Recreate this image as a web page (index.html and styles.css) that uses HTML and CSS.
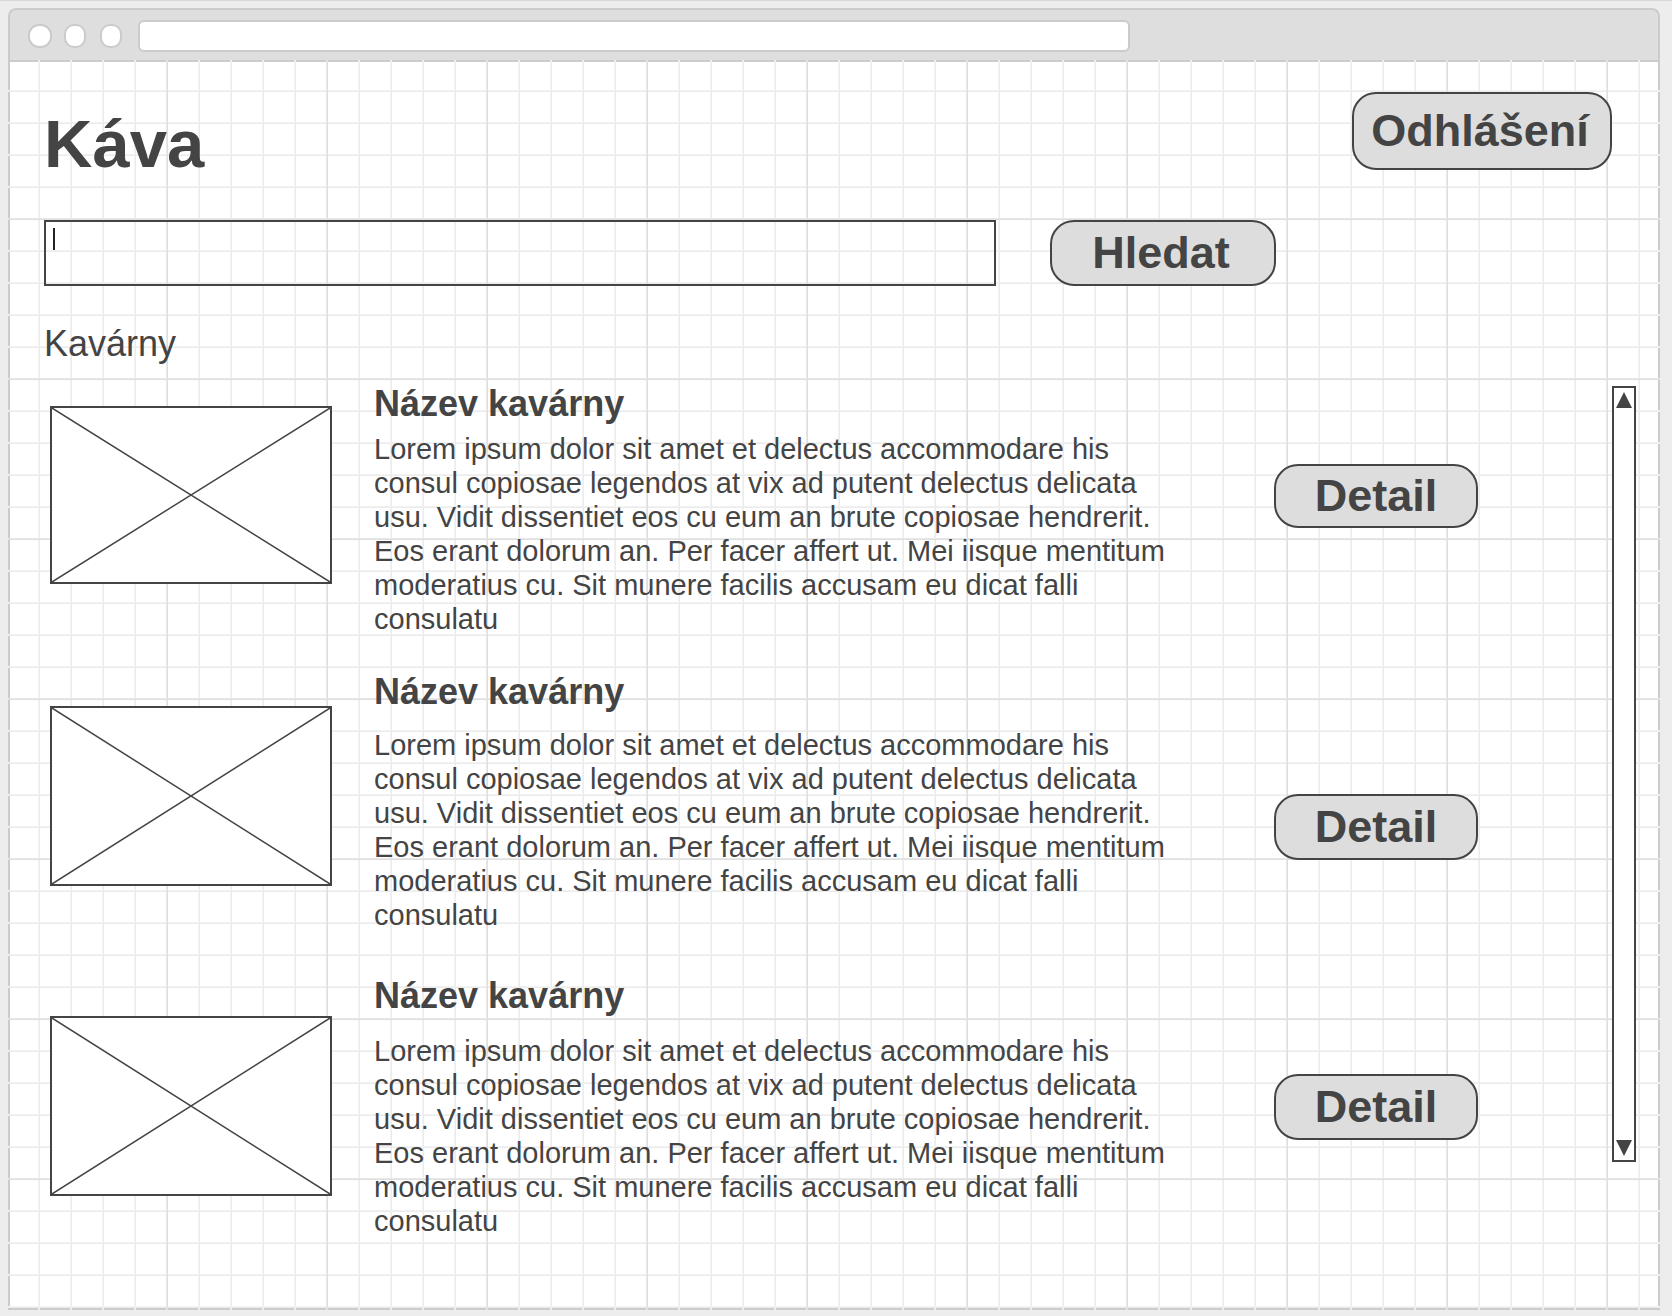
FILE: index.html
```html
<!DOCTYPE html>
<html lang="cs">
<head>
<meta charset="utf-8">
<meta name="viewport" content="width=device-width, initial-scale=1">
<title>Káva</title>
<link rel="stylesheet" href="styles.css">
</head>
<body>
<div class="window">
  <div class="window-bar">
    <span class="dot dot-wide"></span>
    <span class="dot"></span>
    <span class="dot"></span>
    <input class="address" type="text" aria-label="Adresa">
  </div>
  <div class="canvas">
    <header class="header">
      <h1 class="brand">Káva</h1>
      <button class="button button-logout" type="button">Odhlášení</button>
    </header>
    <form class="search">
      <div class="search-field">
        <input class="search-input" type="text" aria-label="Hledat kavárnu">
        <span class="caret"></span>
      </div>
      <button class="button button-search" type="button">Hledat</button>
    </form>
    <h2 class="section-title">Kavárny</h2>
    <div class="results">
      <main class="list">
        <article class="cafe cafe-first">
          <svg class="photo" viewBox="0 0 278 176" preserveAspectRatio="none" aria-hidden="true"><path d="M0 0L278 176M278 0L0 176"/></svg>
          <div class="info">
            <h3 class="name">Název kavárny</h3>
            <p class="text">Lorem ipsum dolor sit amet et delectus accommodare his consul copiosae legendos at vix ad putent delectus delicata usu. Vidit dissentiet eos cu eum an brute copiosae hendrerit. Eos erant dolorum an. Per facer affert ut. Mei iisque mentitum moderatius cu. Sit munere facilis accusam eu dicat falli consulatu</p>
          </div>
          <button class="button button-detail" type="button">Detail</button>
        </article>
        <article class="cafe cafe-second">
          <svg class="photo" viewBox="0 0 278 176" preserveAspectRatio="none" aria-hidden="true"><path d="M0 0L278 176M278 0L0 176"/></svg>
          <div class="info">
            <h3 class="name">Název kavárny</h3>
            <p class="text">Lorem ipsum dolor sit amet et delectus accommodare his consul copiosae legendos at vix ad putent delectus delicata usu. Vidit dissentiet eos cu eum an brute copiosae hendrerit. Eos erant dolorum an. Per facer affert ut. Mei iisque mentitum moderatius cu. Sit munere facilis accusam eu dicat falli consulatu</p>
          </div>
          <button class="button button-detail" type="button">Detail</button>
        </article>
        <article class="cafe cafe-third">
          <svg class="photo" viewBox="0 0 278 176" preserveAspectRatio="none" aria-hidden="true"><path d="M0 0L278 176M278 0L0 176"/></svg>
          <div class="info">
            <h3 class="name">Název kavárny</h3>
            <p class="text">Lorem ipsum dolor sit amet et delectus accommodare his consul copiosae legendos at vix ad putent delectus delicata usu. Vidit dissentiet eos cu eum an brute copiosae hendrerit. Eos erant dolorum an. Per facer affert ut. Mei iisque mentitum moderatius cu. Sit munere facilis accusam eu dicat falli consulatu</p>
          </div>
          <button class="button button-detail" type="button">Detail</button>
        </article>
      </main>
      <div class="scrollbar">
        <button class="arrow" type="button" aria-label="Nahoru"><svg class="arrow-icon" viewBox="0 0 16 16"><path d="M8 0L16 16H0Z"/></svg></button>
        <button class="arrow" type="button" aria-label="Dolů"><svg class="arrow-icon" viewBox="0 0 16 16"><path d="M0 0H16L8 16Z"/></svg></button>
      </div>
    </div>
  </div>
</div>
</body>
</html>
```
FILE: styles.css
```css
* {
  box-sizing: border-box;
}

body {
  margin: 0;
  padding: 7px 12px 6px 8px;
  border-top: 1px solid #d8d8d8;
  background: #ededed;
  color: #444444;
  font-family: "Liberation Sans", Arial, sans-serif;
}

h1,
h2,
h3,
p {
  margin: 0;
}

.window {
  background: #ffffff;
  border-radius: 8px 8px 0 0;
}

.window-bar {
  display: flex;
  align-items: center;
  gap: 12px;
  height: 52px;
  padding: 2px 18px 0;
  border: 2px solid #cbcbcb;
  border-bottom: 0;
  border-radius: 8px 8px 0 0;
  background: #dedede;
}

.dot {
  flex: none;
  width: 22px;
  height: 24px;
  margin-right: 2px;
  border: 2px solid #cbcbcb;
  border-radius: 10px;
  background: #ffffff;
}

.dot-wide {
  width: 24px;
  margin-right: 0;
  border-radius: 11px;
}

.address {
  flex: 0 1 992px;
  min-width: 0;
  height: 32px;
  margin: 0 0 0 2px;
  border: 2px solid #cbcbcb;
  border-radius: 6px;
  background: #ffffff;
}

.canvas {
  position: relative;
  isolation: isolate;
  padding: 30px 22px 70px 34px;
  border: 2px solid #cbcbcb;
}

/* squared paper: fine lines every 32px, stronger ones every 160px */
.canvas::before {
  content: "";
  position: absolute;
  inset: -2px;
  z-index: -1;
  background-image:
    linear-gradient(90deg, #e8e8e8 1px, #dfdfdf 1px, #dfdfdf 2px, transparent 2px),
    linear-gradient(180deg, #e8e8e8 1px, #dfdfdf 1px, #dfdfdf 2px, transparent 2px),
    linear-gradient(90deg, #f2f2f2 1px, #ececec 1px, #ececec 2px, transparent 2px),
    linear-gradient(180deg, #f2f2f2 1px, #ececec 1px, #ececec 2px, transparent 2px);
  background-size: 160px 160px, 160px 160px, 32px 32px, 32px 32px;
  background-position: 158px 0, 0 158px, 30px 0, 0 30px;
}

.header {
  display: flex;
  justify-content: space-between;
  align-items: flex-start;
  padding-right: 24px;
}

.brand {
  padding-top: 14px;
  font-size: 67px;
  line-height: 76px;
}

.button {
  flex: none;
  margin: 0;
  padding: 0;
  border: 2px solid #444444;
  border-radius: 24px;
  background: #dddddd;
  color: #444444;
  font-family: inherit;
  font-size: 45px;
  font-weight: bold;
  line-height: 52px;
}

.button-logout,
.button-search {
  padding-right: 4px;
}

.button-logout {
  width: 260px;
  height: 78px;
}

.search {
  display: flex;
  gap: 54px;
  margin-top: 38px;
}

.search-field {
  position: relative;
  flex: 0 1 952px;
}

.search-input {
  display: block;
  width: 100%;
  height: 66px;
  padding: 6px;
  border: 2px solid #444444;
  border-radius: 0;
  background: transparent;
  color: #444444;
  font-family: inherit;
  font-size: 29px;
}

.caret {
  position: absolute;
  top: 8px;
  left: 9px;
  width: 2px;
  height: 22px;
  background: #222222;
}

.button-search {
  width: 226px;
  height: 66px;
}

.section-title {
  padding-top: 38px;
  font-size: 36px;
  font-weight: normal;
  line-height: 40px;
}

.results {
  display: flex;
  justify-content: space-between;
  align-items: flex-start;
  padding-top: 20px;
}

.list {
  flex: 0 1 1434px;
}

.cafe {
  display: flex;
  align-items: flex-start;
  padding-left: 6px;
}

.photo {
  flex: none;
  width: 282px;
  height: 180px;
  margin-right: 42px;
  border: 2px solid #444444;
  background: #ffffff;
  fill: none;
  stroke: #444444;
  stroke-width: 1.5;
}

.info {
  flex: 0 1 810px;
}

.name {
  font-size: 36px;
  line-height: 40px;
}

.text {
  font-size: 29px;
  line-height: 34px;
}

.button-detail {
  width: 204px;
  height: 66px;
  margin-left: auto;
}

.cafe-first .photo {
  height: 178px;
  margin-top: 22px;
}

.cafe-first .text {
  margin-top: 8px;
}

.cafe-first .button-detail {
  height: 64px;
  margin-top: 80px;
}

.cafe-second {
  margin-top: 36px;
}

.cafe-second .photo {
  margin-top: 34px;
}

.cafe-second .text {
  margin-top: 16px;
}

.cafe-second .button-detail {
  margin-top: 122px;
}

.cafe-third {
  margin-top: 44px;
}

.cafe-third .photo {
  margin-top: 40px;
}

.cafe-third .text {
  margin-top: 18px;
}

.cafe-third .button-detail {
  margin-top: 98px;
}

.scrollbar {
  display: flex;
  flex-direction: column;
  justify-content: space-between;
  width: 24px;
  height: 776px;
  margin-top: 2px;
  padding: 4px 2px;
  border: 2px solid #444444;
  background: #ffffff;
}

.arrow {
  display: block;
  width: 16px;
  height: 16px;
  padding: 0;
  border: 0;
  background: none;
}

.arrow-icon {
  display: block;
  width: 16px;
  height: 16px;
  fill: #444444;
}
```
